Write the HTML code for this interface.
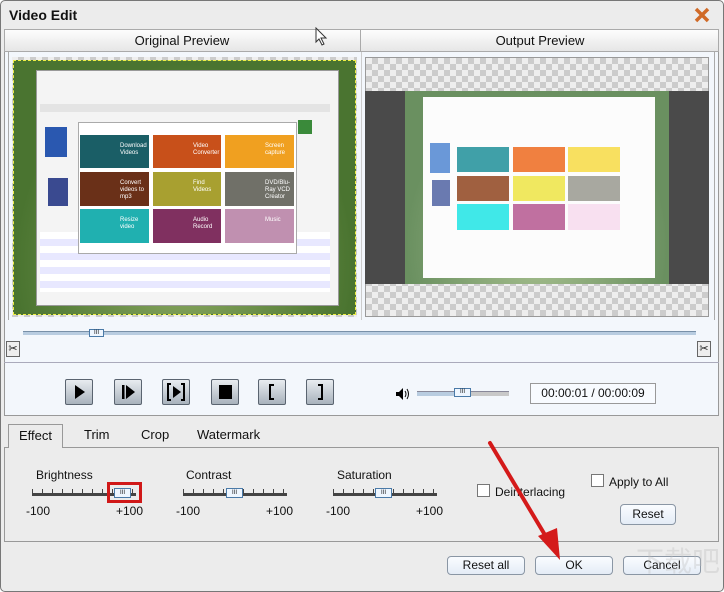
<!DOCTYPE html>
<html><head><meta charset="utf-8"><style>
*{margin:0;padding:0;box-sizing:border-box}
body{width:724px;height:592px;overflow:hidden;background:#fff;font-family:"Liberation Sans",sans-serif;font-size:12px;color:#111;position:relative}
.a{position:absolute}
.btn{position:absolute;background:linear-gradient(#fafcff,#e4ecf6);border:1px solid #8a96a4;border-radius:4px;text-align:center;font-size:12px}
.pb{position:absolute;width:28px;height:26px;top:379px;border:1px solid #5a6470;border-radius:2px;background:linear-gradient(#e8ecf0,#a8b2bc)}
.t{position:absolute;color:#fff;font-size:6px;line-height:7px;padding:8px 0 0 40px}
.cb{position:absolute;width:13px;height:13px;border:1px solid #777;background:#fff}
.ruler{position:absolute;height:12px;border-bottom:3px solid #444}
</style></head><body>
<div class="a" style="left:0;top:0;width:724px;height:592px;border:1px solid #777;border-radius:5px;background:#ececec"></div>
<div class="a" style="left:9px;top:7px;font-weight:bold;font-size:14px">Video Edit</div>
<svg class="a" style="left:693px;top:6px" width="18" height="18"><path d="M3 3L15 15M15 3L3 15" stroke="#d06a28" stroke-width="3.5"/></svg>
<div class="a" style="left:4px;top:29px;width:715px;height:23px;background:linear-gradient(#fdfdfd,#e6e6e6);border:1px solid #aaa"></div>
<div class="a" style="left:360px;top:29px;width:1px;height:23px;background:#aaa"></div>
<div class="a" style="left:4px;top:33px;width:356px;text-align:center;font-size:13px">Original Preview</div>
<div class="a" style="left:361px;top:33px;width:358px;text-align:center;font-size:13px">Output Preview</div>
<svg class="a" style="left:315px;top:27px" width="14" height="20"><path d="M1 1L1 15L4 12L7 18L9 17L6 11L11 11Z" fill="#fff" stroke="#333"/></svg>
<div class="a" style="left:4px;top:52px;width:715px;height:364px;background:#f3f7fc;border:1px solid #999;border-top:none"></div>
<div class="a" style="left:8px;top:52px;width:1px;height:268px;background:#aaa"></div>
<div class="a" style="left:361px;top:52px;width:1px;height:268px;background:#ccc"></div>
<div class="a" style="left:714px;top:52px;width:1px;height:268px;background:#aaa"></div>
<!-- left preview -->
<div class="a" style="left:12px;top:57px;width:345px;height:260px;background:repeating-conic-gradient(#ccc 0 25%,#eee 0 50%) 0 0/12px 12px"></div>
<div class="a" style="left:13px;top:60px;width:343px;height:255px;background:radial-gradient(ellipse at 50% 80%,#8aa860,#4a7430 70%);border:1px dashed #ee4"></div>
<div class="a" style="left:36px;top:70px;width:303px;height:236px;background:#f4f4f4;border:1px solid #999"></div>
<div class="a" style="left:40px;top:104px;width:290px;height:8px;background:#e4e4e4"></div>
<div class="a" style="left:40px;top:232px;width:290px;height:60px;background:repeating-linear-gradient(#fff 0 7px,#e8e8ff 7px 14px)"></div>
<div class="a" style="left:45px;top:127px;width:22px;height:30px;background:#2a58b0"></div>
<div class="a" style="left:48px;top:178px;width:20px;height:28px;background:#3a4a90"></div>
<div class="a" style="left:298px;top:120px;width:14px;height:14px;background:#3a8a3a"></div>
<div class="a" style="left:78px;top:122px;width:219px;height:132px;background:#fff;border:1px solid #aaa"></div>
<div class="t" style="left:80px;top:135px;width:69px;height:33px;background:#1a5e66">Download Videos</div>
<div class="t" style="left:153px;top:135px;width:68px;height:33px;background:#c8501a">Video Converter</div>
<div class="t" style="left:225px;top:135px;width:69px;height:33px;background:#f0a020">Screen capture</div>
<div class="t" style="left:80px;top:172px;width:69px;height:34px;background:#6a3018">Convert videos to mp3</div>
<div class="t" style="left:153px;top:172px;width:68px;height:34px;background:#a8a030">Find Videos</div>
<div class="t" style="left:225px;top:172px;width:69px;height:34px;background:#707068">DVD/Blu-Ray VCD Creator</div>
<div class="t" style="left:80px;top:209px;width:69px;height:34px;background:#20b0b0">Resize video</div>
<div class="t" style="left:153px;top:209px;width:68px;height:34px;background:#803060">Audio Record</div>
<div class="t" style="left:225px;top:209px;width:69px;height:34px;background:#c090b0">Music</div>
<!-- right preview -->
<div class="a" style="left:365px;top:57px;width:344px;height:260px;background:repeating-conic-gradient(#ccc 0 25%,#eee 0 50%) 0 0/12px 12px;border:1px solid #999"></div>
<div class="a" style="left:365px;top:91px;width:344px;height:193px;background:#4a4a4a"></div>
<div class="a" style="left:405px;top:91px;width:264px;height:193px;background:radial-gradient(ellipse at 50% 80%,#a8c090,#6a9060 70%)"></div>
<div class="a" style="left:423px;top:97px;width:232px;height:181px;background:#fcfcfc"></div>
<div class="a" style="left:430px;top:143px;width:20px;height:30px;background:#6a98d8"></div>
<div class="a" style="left:432px;top:180px;width:18px;height:26px;background:#6a7ab0"></div>
<div class="a" style="left:457px;top:147px;width:52px;height:25px;background:#40a0a8"></div>
<div class="a" style="left:513px;top:147px;width:52px;height:25px;background:#f08040"></div>
<div class="a" style="left:568px;top:147px;width:52px;height:25px;background:#f8e060"></div>
<div class="a" style="left:457px;top:176px;width:52px;height:25px;background:#a06040"></div>
<div class="a" style="left:513px;top:176px;width:52px;height:25px;background:#f0e860"></div>
<div class="a" style="left:568px;top:176px;width:52px;height:25px;background:#a8a8a0"></div>
<div class="a" style="left:457px;top:204px;width:52px;height:26px;background:#40e8e8"></div>
<div class="a" style="left:513px;top:204px;width:52px;height:26px;background:#c070a0"></div>
<div class="a" style="left:568px;top:204px;width:52px;height:26px;background:#f8e0f0"></div>
<!-- timeline -->
<div class="a" style="left:23px;top:331px;width:673px;height:4px;background:#b8cce0;border-top:1px solid #7890a8"></div>
<div class="a" style="left:89px;top:329px;width:15px;height:8px;background:#eef6ff;border:1px solid #4a7aa8;font-size:6px;text-align:center;line-height:6px">III</div>
<div class="a" style="left:6px;top:341px;width:14px;height:16px;border:1px solid #666;background:#eee;font-size:11px;text-align:center;line-height:14px">✂</div>
<div class="a" style="left:697px;top:341px;width:14px;height:16px;border:1px solid #666;background:#eee;font-size:11px;text-align:center;line-height:14px">✂</div>
<div class="a" style="left:4px;top:362px;width:715px;height:1px;background:#aab"></div>
<!-- play buttons -->
<div class="pb" style="left:65px"><svg width="26" height="24"><path d="M9 5L19 12L9 19Z"/></svg></div>
<div class="pb" style="left:114px"><svg width="26" height="24"><rect x="7" y="5" width="2.5" height="14"/><path d="M11 5L20 12L11 19Z"/></svg></div>
<div class="pb" style="left:162px"><svg width="26" height="24"><path d="M8 4H5V20H8M18 4H21V20H18" fill="none" stroke="#000" stroke-width="2"/><path d="M10 6L18 12L10 18Z"/></svg></div>
<div class="pb" style="left:211px"><svg width="26" height="24"><rect x="7" y="5" width="13" height="14"/></svg></div>
<div class="pb" style="left:258px"><svg width="26" height="24"><path d="M15 5H11V19H15" fill="none" stroke="#000" stroke-width="2"/></svg></div>
<div class="pb" style="left:306px"><svg width="26" height="24"><path d="M11 5H15V19H11" fill="none" stroke="#000" stroke-width="2"/></svg></div>
<svg class="a" style="left:395px;top:386px" width="16" height="16"><path d="M1 6H4L8 2V14L4 10H1Z"/><path d="M10 5Q12 8 10 11M12 3Q15 8 12 13" fill="none" stroke="#000"/></svg>
<div class="a" style="left:417px;top:391px;width:92px;height:5px;background:linear-gradient(90deg,#b8cce0 45%,#c8c8c8 45%);border-top:1px solid #889"></div>
<div class="a" style="left:454px;top:388px;width:17px;height:9px;background:#eef6ff;border:1px solid #4a7aa8;font-size:6px;text-align:center;line-height:7px">III</div>
<div class="a" style="left:530px;top:383px;width:126px;height:21px;border:1px solid #999;background:#f8fbff;text-align:center;line-height:19px;font-size:12px">00:00:01 / 00:00:09</div>
<!-- tabs -->
<div class="a" style="left:4px;top:447px;width:715px;height:95px;border:1px solid #999"></div>
<div class="a" style="left:8px;top:424px;width:55px;height:24px;border:1px solid #999;border-bottom:none;background:#ececec;text-align:center;line-height:22px;font-size:13px">Effect</div>
<div class="a" style="left:84px;top:427px;font-size:13px">Trim</div>
<div class="a" style="left:141px;top:427px;font-size:13px">Crop</div>
<div class="a" style="left:197px;top:427px;font-size:13px">Watermark</div>
<!-- sliders -->
<div class="a" style="left:36px;top:468px">Brightness</div>
<div class="a" style="left:186px;top:468px">Contrast</div>
<div class="a" style="left:337px;top:468px">Saturation</div>
<div class="ruler" style="left:32px;top:484px;width:104px;background:repeating-linear-gradient(90deg,#444 0 1px,transparent 1px 10px) bottom/100% 4px no-repeat"></div>
<div class="ruler" style="left:183px;top:484px;width:104px;background:repeating-linear-gradient(90deg,#444 0 1px,transparent 1px 10px) bottom/100% 4px no-repeat"></div>
<div class="ruler" style="left:333px;top:484px;width:104px;background:repeating-linear-gradient(90deg,#444 0 1px,transparent 1px 10px) bottom/100% 4px no-repeat"></div>
<div class="a" style="left:114px;top:488px;width:17px;height:10px;background:#eef6ff;border:1px solid #4a7aa8;font-size:6px;text-align:center;line-height:8px">III</div>
<div class="a" style="left:226px;top:488px;width:17px;height:10px;background:#eef6ff;border:1px solid #4a7aa8;font-size:6px;text-align:center;line-height:8px">III</div>
<div class="a" style="left:375px;top:488px;width:17px;height:10px;background:#eef6ff;border:1px solid #4a7aa8;font-size:6px;text-align:center;line-height:8px">III</div>
<div class="a" style="left:107px;top:482px;width:35px;height:21px;border:3px solid #d01818"></div>
<div class="a" style="left:26px;top:504px">-100</div><div class="a" style="left:116px;top:504px">+100</div>
<div class="a" style="left:176px;top:504px">-100</div><div class="a" style="left:266px;top:504px">+100</div>
<div class="a" style="left:326px;top:504px">-100</div><div class="a" style="left:416px;top:504px">+100</div>
<div class="cb" style="left:477px;top:484px"></div><div class="a" style="left:495px;top:485px">Deinterlacing</div>
<div class="cb" style="left:591px;top:474px"></div><div class="a" style="left:609px;top:475px">Apply to All</div>
<div class="btn" style="left:620px;top:504px;width:56px;height:21px;line-height:19px">Reset</div>
<div class="btn" style="left:447px;top:556px;width:78px;height:19px;line-height:17px">Reset all</div>
<div class="btn" style="left:535px;top:556px;width:78px;height:19px;line-height:17px">OK</div>
<div class="btn" style="left:623px;top:556px;width:78px;height:19px;line-height:17px">Cancel</div>
<div class="a" style="left:636px;top:540px;font-size:28px;white-space:nowrap;color:rgba(190,190,190,.35);font-family:'Noto Sans CJK SC',sans-serif">下载吧</div>
<svg class="a" style="left:0;top:0" width="724" height="592"><path d="M490 443L548 540" stroke="#d41a1a" stroke-width="4" stroke-linecap="round"/><path d="M560 560L538 536L557 528Z" fill="#d41a1a"/></svg>
</body></html>
